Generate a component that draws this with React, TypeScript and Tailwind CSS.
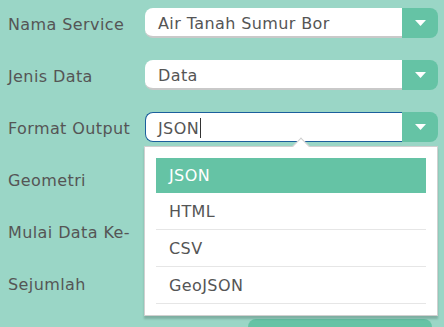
import { useState } from "react";

const fields = [
  { label: "Nama Service", value: "Air Tanah Sumur Bor" },
  { label: "Jenis Data", value: "Data" },
  { label: "Format Output", value: "JSON", focused: true },
  { label: "Geometri", value: "" },
  { label: "Mulai Data Ke-", value: "" },
  { label: "Sejumlah", value: "" },
];

const formats = ["JSON", "HTML", "CSV", "GeoJSON"];

function Caret() {
  return (
    <svg width="11" height="6" viewBox="0 0 11 6" className="block">
      <path d="M0 0h11L5.5 6z" fill="#ffffff" />
    </svg>
  );
}

function SelectBox({ value, focused }: { value: string; focused?: boolean }) {
  return (
    <div className="flex h-[30px] w-[293px]">
      <div
        className={
          focused
            ? "flex flex-1 items-center rounded-l-[8px] border border-r-0 border-[#1c5f9c] bg-white pl-[12px] pt-[3px] text-[#555]"
            : "flex flex-1 items-center rounded-l-[8px] border-b-2 border-[#c9c9c9] bg-white pl-[13px] pt-[4px] text-[#555]"
        }
      >
        <span>{value}</span>
        {focused && <span className="mb-[2px] ml-px h-[20px] w-px bg-[#333]" />}
      </div>
      <div className="flex w-[36px] items-center justify-center rounded-r-[8px] bg-[#65c3a5]">
        <Caret />
      </div>
    </div>
  );
}

export default function App() {
  const [selected] = useState("JSON");

  return (
    <div
      className="relative h-[327px] w-[444px] overflow-hidden bg-[#9ad6c6] pl-[8px] pt-[8px] text-[16px] tracking-[0.4px] text-[#555]"
      style={{ fontFamily: '"DejaVu Sans", Verdana, sans-serif' }}
    >
      <div className="flex flex-col gap-[22px]">
        {fields.map((field) => (
          <div key={field.label} className="relative flex h-[30px] items-center">
            <div className="w-[137px] shrink-0 pt-[4px]">{field.label}</div>
            {field.value && <SelectBox value={field.value} focused={field.focused} />}
            {field.focused && (
              <div className="absolute left-[136px] top-[34px] z-10 w-[294px] border border-[#d0d0d0] bg-white px-[11px] pb-[11px] pt-[11px] shadow-[0_3px_2px_rgba(0,0,0,0.18)]">
                <div className="absolute -top-[7px] left-[150px] h-[12px] w-[12px] rotate-45 border-l border-t border-[#cfcfcf] bg-white" />
                {formats.map((format) => (
                  <div
                    key={format}
                    className={
                      format === selected
                        ? "relative flex h-[35px] items-center bg-[#65c3a5] pl-[13px] text-white"
                        : "flex h-[37px] items-center border-b border-[#e6e6e6] pl-[13px] pt-[2px] text-[#555]"
                    }
                  >
                    {format}
                  </div>
                ))}
              </div>
            )}
          </div>
        ))}
      </div>
      <div className="absolute left-[248px] top-[319px] h-[20px] w-[184px] rounded-[8px] bg-[#65c3a5]" />
    </div>
  );
}
